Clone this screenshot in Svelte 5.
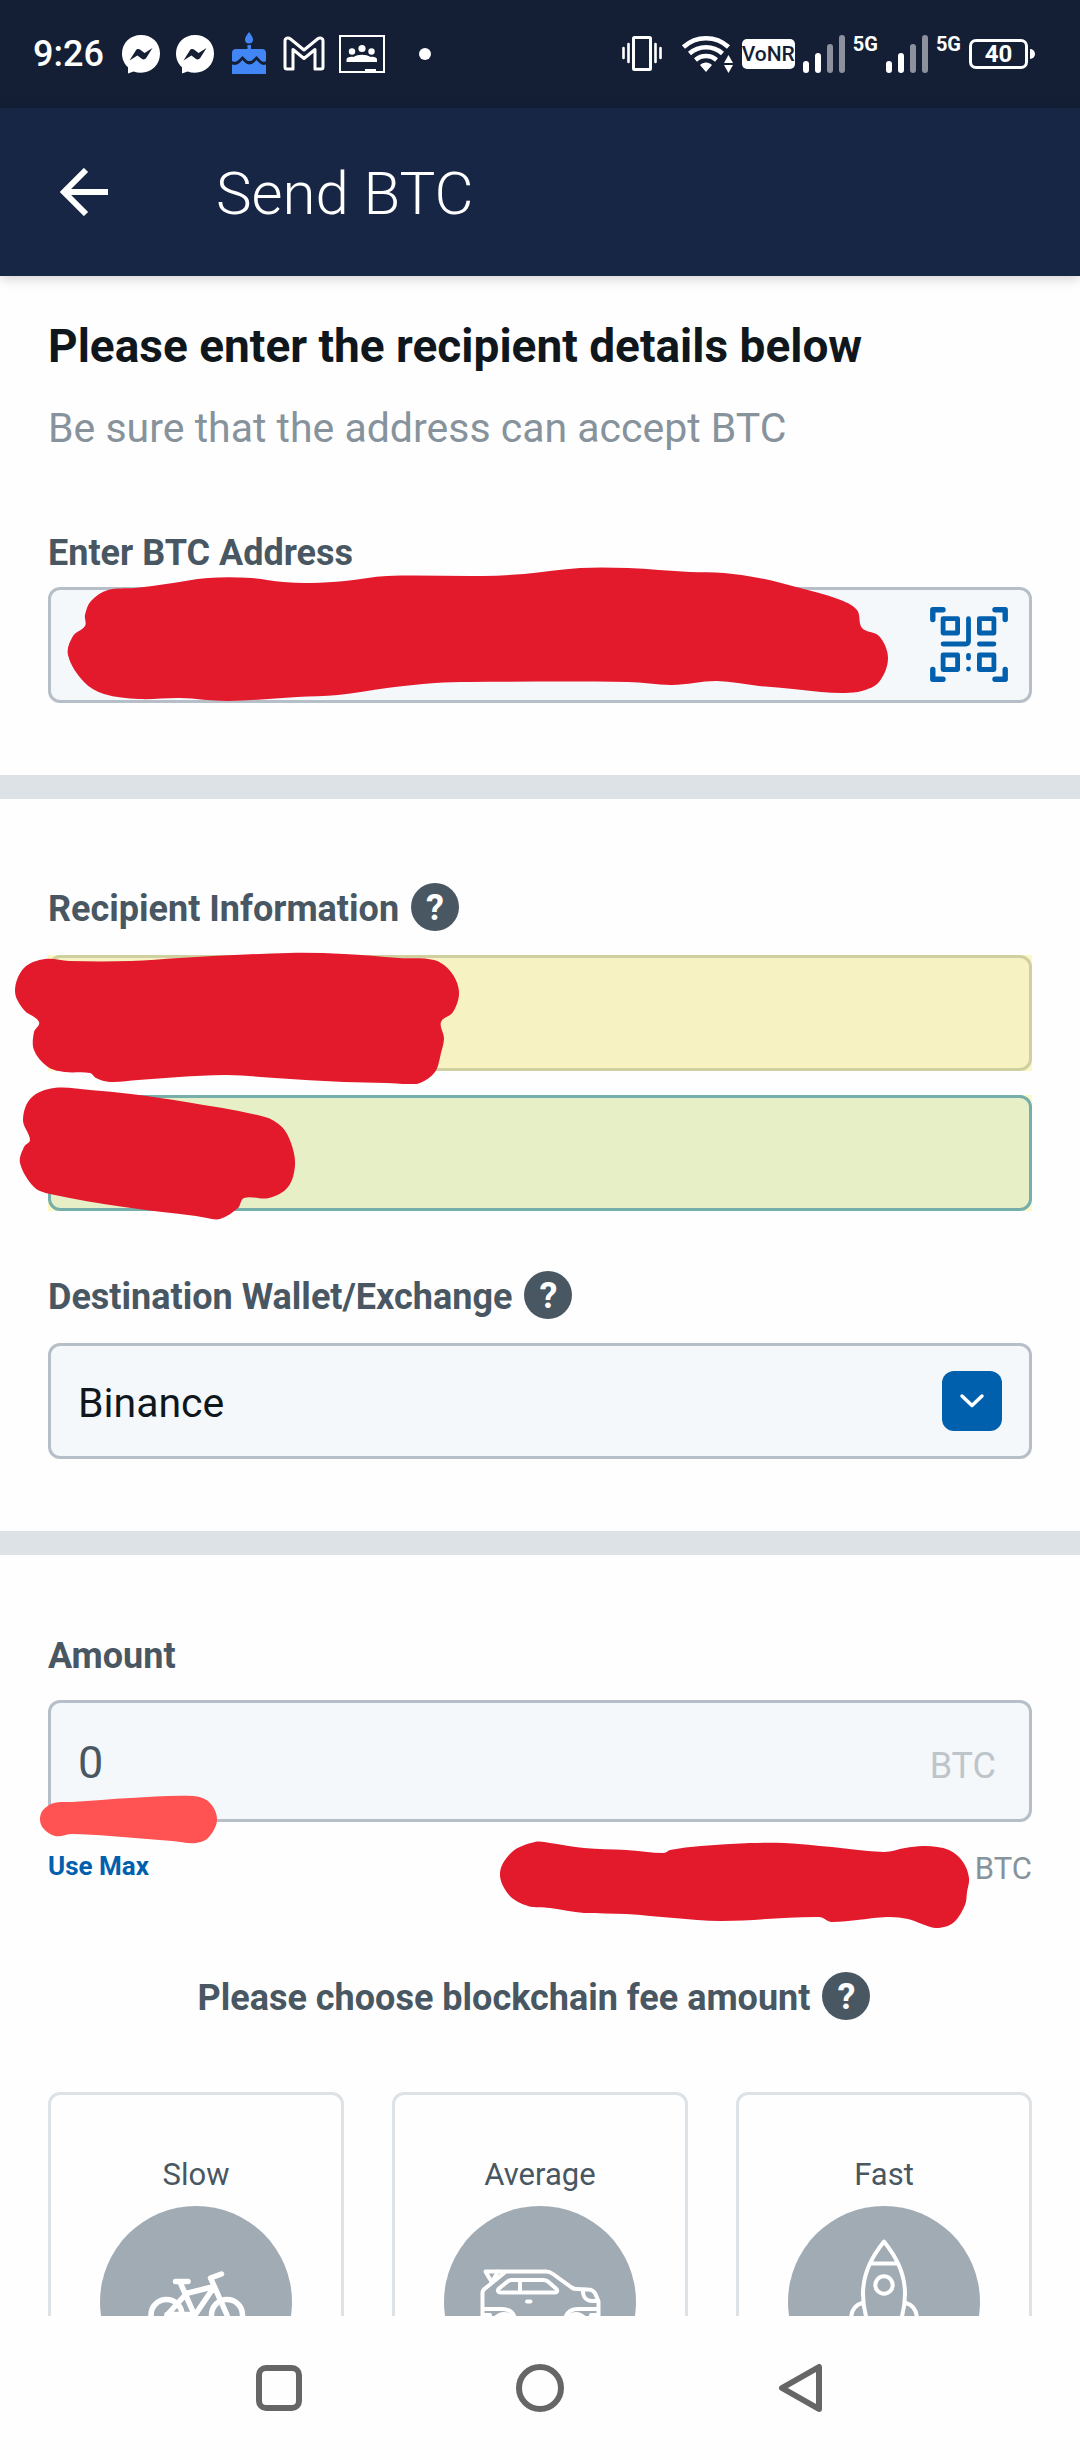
<script>
	let address = $state('');
	let firstName = $state('');
	let lastName = $state('');
	let wallet = $state('Binance');
	let amount = $state('0');
	let speed = $state('');

	const wallets = ['Binance', 'Coinbase', 'Kraken', 'Other'];
	const speeds = ['Slow', 'Average', 'Fast'];

	// Outline points of each marker stroke, inside its own viewBox
	const marks = {
		address: [
			[17, 59], [17, 48], [23, 34], [40, 23], [67, 21], [98, 17], [140, 11], [184, 11], [215, 15],
			[243, 16], [277, 14], [319, 9], [415, 9], [456, 7], [512, 1], [560, 1], [622, 5], [656, 6],
			[691, 11], [732, 21], [770, 32], [789, 43], [794, 61], [811, 69], [820, 91], [811, 115],
			[794, 124], [777, 126], [753, 125], [725, 122], [691, 119], [649, 114], [604, 118], [560, 115],
			[401, 115], [367, 116], [319, 121], [270, 128], [229, 130], [160, 134], [112, 131], [71, 132],
			[36, 127], [16, 115], [0, 88], [5, 69]
		],
		first: [
			[24, 69], [9, 57], [0, 38], [9, 15], [30, 6], [54, 8], [116, 8], [164, 5], [274, 0],
			[329, 1], [384, 5], [419, 7], [436, 19], [444, 39], [438, 59], [426, 69], [429, 85],
			[426, 100], [420, 119], [405, 130], [393, 131], [371, 130], [329, 129], [260, 125],
			[212, 122], [164, 124], [123, 127], [95, 129], [81, 125], [75, 120], [50, 119], [33, 114],
			[19, 97], [19, 79]
		],
		last: [
			[10, 52], [3, 32], [11, 10], [34, 0], [70, 2], [111, 6], [166, 14], [245, 29], [262, 39],
			[271, 55], [275, 77], [268, 99], [249, 110], [224, 110], [218, 120], [200, 131], [187, 130],
			[176, 128], [104, 119], [30, 106], [14, 99], [0, 75], [4, 59]
		],
		fiat: [
			[14, 7], [32, 6], [91, 2], [153, 0], [169, 6], [177, 23], [169, 41], [156, 47], [132, 45],
			[70, 40], [32, 38], [15, 40], [3, 32], [0, 23], [3, 14]
		],
		balance: [
			[35, 0], [50, 1], [84, 6], [126, 8], [164, 11], [170, 8], [201, 4], [250, 1], [284, 1],
			[332, 5], [384, 10], [405, 6], [425, 4], [449, 8], [463, 20], [469, 36], [467, 50],
			[465, 63], [453, 81], [436, 86], [422, 82], [408, 77], [387, 75], [332, 80], [319, 75],
			[222, 79], [174, 76], [126, 72], [84, 71], [50, 66], [28, 64], [9, 53], [0, 31], [12, 10]
		]
	};

	// Closed smooth curve through the points; handles are a third of the segment so it never overshoots
	function outline(points) {
		const n = points.length;
		const at = (i) => points[(i + n) % n];
		const handle = (i, length) => {
			const [x1, y1] = at(i - 1);
			const [x2, y2] = at(i + 1);
			const k = length / 3 / Math.hypot(x2 - x1, y2 - y1);
			return [(x2 - x1) * k, (y2 - y1) * k];
		};
		let d = `M${points[0]}`;
		for (let i = 0; i < n; i++) {
			const [x1, y1] = at(i);
			const [x2, y2] = at(i + 1);
			const length = Math.hypot(x2 - x1, y2 - y1);
			const a = handle(i, length);
			const b = handle(i + 1, length);
			d += `C${x1 + a[0]},${y1 + a[1]} ${x2 - b[0]},${y2 - b[1]} ${x2},${y2}`;
		}
		return d + 'Z';
	}
</script>

{#snippet messenger()}
	<svg width="40" height="40" viewBox="0 0 40 40" aria-hidden="true">
		<path fill="#fff" d="M20 1C9.300 1 1 8.900 1 19.500c0 5.600 2.300 10.400 6 13.700V39.500l5.500-2c2.300 .8 4.800 1.200 7.500 1.200 10.700 0 19-8.100 19-19.200S30.700 1 20 1z" />
		<path fill="#141f36" d="M8.500 26.500 14.800 16.500c1-1.500 3-1.900 4.500-.8l4.300 3.200 7.900-4.900-6.300 10c-1 1.500-3 1.900-4.500 .8l-4.300-3.200z" />
	</svg>
{/snippet}

{#snippet signal()}
	<svg width="42" height="40" viewBox="0 0 42 40" aria-hidden="true">
		<rect x="0" y="27" width="6" height="12" rx="3" fill="#fff" />
		<rect x="12" y="19" width="6" height="20" rx="3" fill="#fff" />
		<rect x="24" y="10" width="6" height="29" rx="3" fill="#8c919d" />
		<rect x="36" y="1" width="6" height="38" rx="3" fill="#8c919d" />
	</svg>
	<span class="network">5G</span>
{/snippet}

{#snippet help(topic)}
	<button type="button" class="help" aria-label="Help: {topic}">?</button>
{/snippet}

{#snippet mark(name, width, height)}
	<svg class="mark mark-{name}" {width} {height} viewBox="0 0 {width} {height}" aria-hidden="true">
		<path d={outline(marks[name])} />
	</svg>
{/snippet}

<div class="screen">
	<div class="status-bar">
		<div class="status-left">
			<span class="time">9:26</span>
			{@render messenger()}
			{@render messenger()}
			<svg width="40" height="44" viewBox="0 0 40 44" aria-hidden="true">
				<path fill="#4286f5" d="M20 0c2 3 4 5 4 7.500a4 4 0 0 1-8 0C16 5 18 3 20 0zM18.500 13h3.500v4H33c2.500 0 4 1.500 4 4v8c-3 2-5 0-6.500-2l-3-3-3.500 3.500c-2 2-5 2-7 0L13.500 24l-3 3c-2 2-4 4-7.500 2v-8c0-2.500 1.500-4 4-4h11.500zM3 32.500c3 1 6 0 8-2l2.500-2.500 2.500 2.500c2.500 2.500 6.500 2.500 9 0l2.500-2.500 2.500 2.500c2 2 4 3 7 2V42H3z" />
			</svg>
			<svg width="42" height="36" viewBox="0 0 42 36" fill="none" stroke="#fff" stroke-width="3" stroke-linejoin="round" aria-hidden="true">
				<path d="M2 31V5c0-3 3-4 5.500-2L21 14 34.500 3C37 1 40 2 40 5v26c0 1.500-.5 2-2 2h-6V13.500L21 22.500 10 13.500V33H4c-1.500 0-2-.5-2-2z" />
			</svg>
			<svg width="46" height="38" viewBox="0 0 46 38" aria-hidden="true">
				<path d="M1 1h44v36H1z" fill="none" stroke="#fff" stroke-width="2" />
				<g fill="#fff">
					<circle cx="23" cy="13.500" r="3.600" />
					<circle cx="13" cy="16.500" r="3.200" />
					<circle cx="32.500" cy="16.500" r="3.200" />
					<path d="M7.500 27v-2.500c0-2 3.500-3 7-2.500 2.500-1.500 5-2.200 8.500-2.200s6 .7 8.500 2.200c3.500-.5 6.500 .5 6.500 2.500V27zM26 34h11v3H26z" />
				</g>
			</svg>
			<span class="dot"></span>
		</div>
		<div class="status-right">
			<svg width="52" height="38" viewBox="0 0 52 38" fill="none" stroke="#fff" aria-hidden="true">
				<rect x="11.500" y="2.500" width="17" height="32" rx="1" stroke-width="3" />
				<path stroke-width="2.600" stroke-linecap="round" d="M1.500 13v10M6.500 9v18M33.500 9v18M38.500 13v10" />
			</svg>
			<svg width="52" height="38" viewBox="0 0 52 38" aria-hidden="true">
				<g fill="none" stroke="#fff" stroke-width="4.500">
					<path d="M1.500 12a33 33 0 0 1 45 0" />
					<path d="M7.500 18.500a25 25 0 0 1 33 0" />
					<path d="M13.500 25a16 16 0 0 1 21 0" />
				</g>
				<path fill="#fff" d="M24 37l-6-7c3-3.500 9-3.500 12 0zM46.500 20l4.500 8h-9zM46.500 38l4.500-8h-9z" />
			</svg>
			<span class="vonr">VoNR</span>
			{@render signal()}
			{@render signal()}
			<span class="battery"><span class="level">40</span></span>
		</div>
	</div>

	<header>
		<button type="button" class="back" aria-label="Back">
			<svg width="48" height="48" viewBox="0 0 48 48" fill="none" stroke="#fff" stroke-width="6" aria-hidden="true">
				<path d="M26 2 4 24l22 22M4 24h44" />
			</svg>
		</button>
		<div class="title">Send BTC</div>
	</header>

	<main>
		<section class="address">
			<h1>Please enter the recipient details below</h1>
			<p>Be sure that the address can accept BTC</p>
			<div class="label-row">
				<label for="address">Enter BTC Address</label>
			</div>
			<div class="field">
				<input id="address" type="text" bind:value={address} />
				<button type="button" class="scan" aria-label="Scan QR code">
					<svg width="78" height="76" viewBox="0 0 78 76" fill="none" stroke="#0060ae" stroke-linecap="round" stroke-linejoin="round" aria-hidden="true">
						<path stroke-width="5.400" d="M2.800 12.500V2.800H13M65 2.800h10.200v9.700M75.200 62.500v9.700H65M13 72.200H2.800v-9.700" />
						<path stroke-width="4.800" d="M13.100 11.700h14.500v14.300H13.100zM49.400 11.700h14.500v14.300H49.400zM13.100 48h14.500v14.500H13.100zM49.400 48h14.500v14.500H49.400zM38.500 11.700v22.300c0 2-1 3-3 3H13.100M49.400 37h14.500M38.500 48.300v2.600M38.500 62v.1" />
					</svg>
				</button>
				{@render mark('address', 822, 136)}
			</div>
		</section>

		<section class="recipient">
			<div class="label-row">
				<label for="first-name">Recipient Information</label>
				{@render help('Recipient Information')}
			</div>
			<div class="field filled">
				<input id="first-name" type="text" aria-label="First name" bind:value={firstName} />
				{@render mark('first', 446, 134)}
			</div>
			<div class="field filled active">
				<input type="text" aria-label="Last name" bind:value={lastName} />
				{@render mark('last', 278, 134)}
			</div>
			<div class="label-row destination">
				<label for="wallet">Destination Wallet/Exchange</label>
				{@render help('Destination Wallet/Exchange')}
			</div>
			<div class="field">
				<select id="wallet" bind:value={wallet}>
					{#each wallets as name}
						<option>{name}</option>
					{/each}
				</select>
				<span class="chevron">
					<svg width="26" height="16" viewBox="0 0 26 16" fill="none" stroke="#fff" stroke-width="3.500" stroke-linecap="round" stroke-linejoin="round" aria-hidden="true">
						<path d="m3 3 10 9.500L23 3" />
					</svg>
				</span>
			</div>
		</section>

		<section class="amount">
			<div class="label-row">
				<label for="amount">Amount</label>
			</div>
			<div class="field">
				<input id="amount" type="text" inputmode="decimal" bind:value={amount} />
				<span class="unit">BTC</span>
				{@render mark('fiat', 178, 48)}
			</div>
			<div class="balance">
				<button type="button" class="use-max">Use Max</button>
				<span class="available">BTC</span>
				{@render mark('balance', 470, 88)}
			</div>

			<div class="label-row fee-title">
				<h2>Please choose blockchain fee amount</h2>
				{@render help('blockchain fee')}
			</div>
			<div class="fees">
				{#each speeds as name}
					<label class="fee">
						<input type="radio" name="fee" value={name} bind:group={speed} />
						<span>{name}</span>
						<svg width="192" height="192" viewBox="0 0 192 192" fill="none" stroke="#fff" stroke-width="4" stroke-linecap="round" stroke-linejoin="round" aria-hidden="true">
							<circle cx="96" cy="96" r="96" fill="#a1abb4" stroke="none" />
							{#if name === 'Slow'}
								<g stroke-width="5.500">
									<circle cx="66.500" cy="109" r="15.500" />
									<circle cx="127" cy="109" r="15.500" />
									<path d="M75.500 75.500H88M80 76l14 32M86 87.500l28-7M114 81 95 109M67 109l20-22M67 108.500h28M111 73l16 36M110.500 72l11-4" />
								</g>
							{:else if name === 'Average'}
								<path d="M38.500 118V87c0-2 1-3.500 2.500-4.500L62 65.500M41.500 65.500H102c3 0 5 1 7 2.500l18 13c1.500 1.500 3 2 5 2l12 .5c4 0 6 1.500 7.500 4.500l3 7.500V118" />
								<path d="m42 66.500 6 10M54 65.500l-4 7" />
								<path d="M57 86.500c-3 0-4-2-2-4l8.500-7c1.500-1 2.500-1.500 4-1.500H99c2 0 3.500 .5 5 1.500l8.500 7.500c1.500 2 .5 3.500-1.500 3.500zM76 74v12M83 95.500h3.500M139 85c0 6 3.500 10 9 10h6" />
								<path d="M39 103h19c8 0 13 5 14 14M154 103h-20c-8 0-13 5-14 14M40 109h6M147 109h6" />
								<circle cx="60" cy="119" r="11" />
								<circle cx="132" cy="119" r="11" />
							{:else}
								<path d="M96 35.500C87 47 75 64 75 88c0 17 6 33 10 42h22c4-9 10-25 10-42 0-24-12-41-21-52.500zM84 57.500h24M74 97c-7 2-11 8-11 17v14M118 97c7 2 11 8 11 17v14" />
								<circle cx="96" cy="79" r="8.700" />
							{/if}
						</svg>
					</label>
				{/each}
			</div>
		</section>
	</main>

	<nav>
		<button type="button" aria-label="Recent apps">
			<svg width="50" height="50" viewBox="0 0 50 50" fill="none" stroke="#666" stroke-width="6" aria-hidden="true">
				<rect x="5" y="5" width="40" height="40" rx="7" />
			</svg>
		</button>
		<button type="button" aria-label="Home">
			<svg width="50" height="50" viewBox="0 0 50 50" fill="none" stroke="#666" stroke-width="6" aria-hidden="true">
				<circle cx="25" cy="25" r="21" />
			</svg>
		</button>
		<button type="button" aria-label="Back">
			<svg width="50" height="50" viewBox="0 0 50 50" fill="none" stroke="#666" stroke-width="6" stroke-linejoin="round" aria-hidden="true">
				<path d="M43 4v42L6 25z" />
			</svg>
		</button>
	</nav>
</div>

<style>
	:global(body) {
		margin: 0;
		background: #fff;
	}

	.screen {
		display: flex;
		flex-direction: column;
		height: 100vh;
		font-family: Roboto, sans-serif;
		color: #485762;
		background: #fefefe;
	}

	button {
		padding: 0;
		border: none;
		background: none;
		font-family: inherit;
		cursor: pointer;
	}

	svg {
		display: block;
		flex: none;
	}

	.status-bar {
		display: flex;
		flex: none;
		justify-content: space-between;
		align-items: center;
		height: 108px;
		padding: 0 45px 0 33px;
		background: #141f36;
		color: #fff;
	}

	.status-left {
		display: flex;
		align-items: center;
		gap: 14px;
	}

	.time {
		margin-right: 3px;
		font-size: 36px;
		font-weight: 500;
	}

	.dot {
		width: 12px;
		height: 12px;
		margin-left: 20px;
		border-radius: 50%;
		background: #fff;
	}

	.status-right {
		display: flex;
		align-items: center;
		gap: 8px;
	}

	.vonr {
		border-radius: 5px;
		background: #fff;
		color: #141f36;
		font-size: 21px;
		font-weight: 500;
		line-height: 30px;
	}

	.network {
		align-self: flex-start;
		font-size: 20px;
		font-weight: 700;
		line-height: 20px;
	}

	.battery {
		display: flex;
		align-items: center;
		gap: 2px;
	}

	.battery::after {
		content: '';
		width: 5px;
		height: 10px;
		border-radius: 0 5px 5px 0;
		background: #fff;
	}

	.level {
		width: 53px;
		border: 3px solid #fff;
		border-radius: 7px;
		font-size: 24px;
		font-weight: 700;
		line-height: 24px;
		text-align: center;
	}

	header {
		display: flex;
		flex: none;
		align-items: center;
		gap: 108px;
		height: 168px;
		padding: 0 60px;
		background: #172644;
		box-shadow: 0 2px 12px rgba(0, 0, 0, 0.2);
		z-index: 1;
	}

	.title {
		padding-top: 2px;
		color: #fff;
		font-size: 60px;
		font-weight: 300;
	}

	main {
		flex: 1;
		min-height: 0;
		overflow-x: hidden;
		overflow-y: auto;
		scrollbar-width: none;
	}

	section {
		padding: 84px 48px 72px;
		border-bottom: 24px solid #dde2e6;
	}

	section.address {
		padding-top: 40px;
	}

	section.amount {
		padding-top: 75px;
		border-bottom: none;
	}

	h1 {
		margin: 0;
		color: #10171c;
		font-size: 46px;
		font-weight: 700;
		line-height: 60px;
	}

	p {
		margin: 28px 0 75px;
		color: #87939c;
		font-size: 41px;
		line-height: 48px;
	}

	.label-row {
		display: flex;
		align-items: center;
		gap: 12px;
		min-height: 48px;
		margin-bottom: 24px;
		font-size: 36px;
		font-weight: 700;
	}

	.label-row label,
	.label-row h2 {
		padding-top: 3px;
	}

	.address .label-row {
		margin-bottom: 12px;
	}

	.amount .label-row {
		margin-bottom: 22px;
	}

	.label-row.destination {
		margin-top: 60px;
	}

	.help {
		width: 48px;
		height: 48px;
		padding-top: 2px;
		border-radius: 50%;
		background: #485762;
		color: #fff;
		font-size: 36px;
		font-weight: 700;
		line-height: 46px;
	}

	.field {
		position: relative;
		display: flex;
		align-items: center;
		height: 116px;
	}

	.field + .field {
		margin-top: 24px;
	}

	.amount .field {
		height: 122px;
	}

	.field input,
	.field select {
		box-sizing: border-box;
		width: 100%;
		height: 100%;
		padding: 3px 27px 0;
		border: 3px solid #b6bfc7;
		border-radius: 12px;
		outline: none;
		appearance: none;
		background: #f4f8fb;
		color: #10171c;
		font-family: inherit;
		font-size: 41px;
	}

	.amount .field input {
		color: #485762;
		font-size: 45px;
	}

	/* the autofill tint also fills the corners outside the border */
	.filled {
		background: #fdf9c6;
	}

	.filled input {
		border-color: #cfcf9f;
		background: #f7f2c1;
	}

	.filled.active input {
		border-color: #75aeab;
		background: #e6efc6;
	}

	.scan {
		position: absolute;
		right: 24px;
	}

	.chevron {
		position: absolute;
		right: 30px;
		display: flex;
		justify-content: center;
		align-items: center;
		width: 60px;
		height: 60px;
		border-radius: 12px;
		background: #0060ae;
		pointer-events: none;
	}

	.unit {
		position: absolute;
		right: 36px;
		padding-top: 10px;
		color: #bec5ca;
		font-size: 36px;
	}

	.balance {
		position: relative;
		display: flex;
		justify-content: space-between;
		align-items: center;
		height: 40px;
		margin-top: 24px;
	}

	.use-max {
		color: #0060ae;
		font-size: 26px;
		font-weight: 700;
	}

	.available {
		padding-top: 4px;
		color: #87939c;
		font-size: 31px;
	}

	.label-row.fee-title {
		justify-content: center;
		margin: 86px 12px 72px 0;
	}

	h2 {
		margin: 0;
		font-size: 36px;
		font-weight: 700;
	}

	.fees {
		display: grid;
		grid-template-columns: repeat(3, 1fr);
		gap: 48px;
	}

	.fee {
		display: flex;
		flex-direction: column;
		align-items: center;
		gap: 11px;
		padding: 60px 0 48px;
		border: 3px solid #dde2e6;
		border-radius: 12px;
		font-size: 31px;
		line-height: 40px;
		cursor: pointer;
	}

	.fee input {
		position: absolute;
		opacity: 0;
	}

	.fee:has(:checked) {
		border-color: #0060ae;
	}

	.mark {
		position: absolute;
		overflow: visible;
		fill: #e3192c;
		pointer-events: none;
	}

	.mark-address {
		left: 20px;
		top: -20px;
	}

	.mark-first {
		left: -33px;
		top: -2px;
	}

	.mark-last {
		left: -28px;
		top: -7px;
	}

	.mark-fiat {
		left: -8px;
		bottom: -22px;
		fill: #ff5252;
	}

	.mark-balance {
		right: 62px;
		top: -4px;
	}

	nav {
		display: flex;
		flex: none;
		justify-content: center;
		align-items: center;
		gap: 211px;
		height: 144px;
		background: #fefefe;
	}
</style>
